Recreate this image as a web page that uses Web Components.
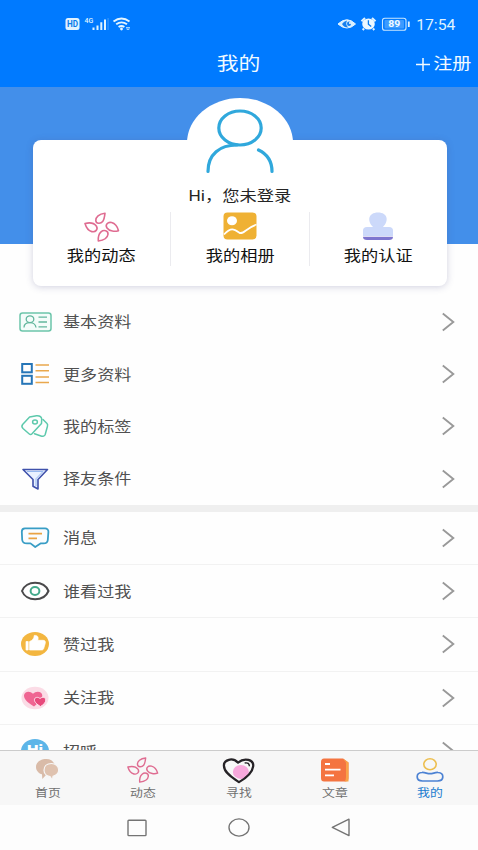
<!DOCTYPE html>
<html lang="zh-CN">
<head>
<meta charset="utf-8">
<title>我的</title>
<style>
html,body{margin:0;padding:0}
body{width:478px;height:850px;overflow:hidden;background:#fefefe;font-family:Roboto,"Noto Sans CJK SC",sans-serif}
</style>
</head>
<body>
<profile-app></profile-app>
<script>
const petals = `<g fill="none" stroke="#df6c91" stroke-width="1.6" stroke-linejoin="round"><path d="M21 1.2C15 1.8 11.5 5 11.8 8.5C12 11.8 16.5 12.2 18.7 9.5C20.3 7.5 20.7 4 21 1.2Z"/><path d="M1 11.5C5 10.5 10 11 12.3 14C14.5 17.3 11.5 20.5 7.8 19.6C4 18.6 2 15 1 11.5Z"/><path d="M34.5 18.7C31 19.8 25.5 19.5 23 16C20.8 12.8 23.8 9.6 27.6 10.6C31.3 11.6 33.5 15 34.5 18.7Z"/><path d="M14.3 29C14 25.5 14.8 21.8 17 19.8C20 17.3 24.3 18.7 24 22.2C23.6 26 19 28.3 14.3 29Z"/></g>`;
const heartPath = 'M18 27C12 23 2 17 2 9C2 3 11 0 17 6C24 0 34 3 33 10C32 18 23 24 18 27Z';
const icons = {
  petals: ['0 0 36 30', petals],
  id: ['0 0 36 30', `<rect x="3" y="6.1" width="31" height="18" rx="2.5" fill="#f4fcfa" stroke="#6cc5aa" stroke-width="1.5"/><g fill="none" stroke="#62b69d" stroke-width="1.3"><ellipse cx="13" cy="12.2" rx="3.8" ry="3.4"/><path d="M7 20.5C7 17 10 15.6 13 15.6C16 15.6 18.7 17.5 19 20.5M21.5 10.2H30M21.5 15H30M21.5 19.8H30"/></g>`],
  more: ['0 0 36 30', `<g fill="none" stroke="#2675b7" stroke-width="2"><rect x="5.2" y="5" width="9.6" height="8.3"/><rect x="5.2" y="16.8" width="9.6" height="8"/></g><path d="M18.5 6H32M18.5 11.7H32M18.5 18.1H32M18.5 23.5H32" stroke="#e9a84d" stroke-width="1.5"/>`],
  tag: ['0 0 36 30', `<g fill="none" stroke="#5dc9ac" stroke-width="1.5" stroke-linejoin="round" stroke-linecap="round"><path d="M5.6 13.5L12.6 6L19.5 4.7C22.5 4.5 24.5 6 24.7 8L24.5 12.5L15 22.8C14 23.8 12.7 23.3 12 22.7L6 17.5C4.5 16 4.6 14.8 5.6 13.5Z"/><path d="M26 8.5L30 12.5C30.8 13.3 30.7 14.5 30.4 15.5L28.2 23.5C27.6 25.3 25.7 25.6 24 25L17.5 22.7"/><ellipse cx="18" cy="11" rx="2.4" ry="2"/></g>`],
  funnel: ['0 0 36 30', `<path d="M6 5.5H30.5L21 15.5V25L16 22.3V15.5Z" fill="#e9f1ff" stroke="#3f51ab" stroke-width="1.6" stroke-linejoin="round"/><path d="M10 7.5H26L19 14.7V22" fill="none" stroke="#95b8ef"/>`],
  message: ['0 0 36 30', `<path d="M8 5.4H28C30 5.4 31.6 6.8 31.4 8.8L30.8 17C30.6 19.5 28.5 20.4 26.5 20.4H23.5L18.2 24L13.5 20.4H10C7 20.4 5.5 19.2 5.2 17L4.8 8.8C4.8 6.5 6 5.4 8 5.4Z" fill="#fafdff" stroke="#389dc5" stroke-width="1.8" stroke-linejoin="round"/><path d="M11.5 10.6H25M11.5 15.4H20" stroke="#e9a344" stroke-width="1.7"/>`],
  eye: ['0 0 36 30', `<path d="M5 15C9 4 27 4 31.5 15C27 26 9 26 5 15Z" fill="#fff" stroke="#4a494b" stroke-width="2"/><ellipse cx="18" cy="15" rx="4.4" ry="3.9" fill="#fff" stroke="#43a98b" stroke-width="2"/>`],
  thumb: ['0 0 36 30', `<ellipse cx="18" cy="15" rx="14" ry="12" fill="#f3b640"/><path d="M9 12.5H11.2V21H9ZM12.6 12.5C16 11.3 17 9 17.3 6.4C21.5 6.2 21.5 9 20.8 11.3H26C28.4 11.3 28.7 13 28.2 14.5L26.7 19.5C26.3 20.7 25.5 21 24.5 21H12.6Z" fill="#fff" stroke="#fff" stroke-width=".7" stroke-linejoin="round"/>`],
  hearts: ['0 0 36 30', `<ellipse cx="18" cy="15" rx="13.5" ry="11.3" fill="#fbdce6"/><path d="M17 23.5C12 20.5 6.8 16.5 7 12.5C7.2 8.3 13 7.2 16 10.8C19 7.2 25.5 8.3 25.3 12.5C25.2 16.5 21 20.5 17 23.5Z" fill="#ef6592"/><path d="M23.5 23.5C20 21.5 17.3 19 17.4 16.8C17.5 14 21.2 13.6 23 15.6C25.2 13.4 28.8 14.2 28.8 17C28.8 19.5 26.6 21.7 23.5 23.5Z" fill="#e84a7c" stroke="#ffe3ed"/>`],
  hi: ['0 0 36 30', `<ellipse cx="18" cy="15" rx="14" ry="12" fill="#5cb5e8"/><text x="18" y="18" text-anchor="middle" font-family="Roboto,sans-serif" font-size="13" font-weight="900" fill="#fff" textLength="16" lengthAdjust="spacingAndGlyphs">Hi</text>`],
  photo: ['0 0 34 28', `<rect x=".5" y=".5" width="33" height="27" rx="4" fill="#efb134"/><ellipse cx="9" cy="8.7" rx="5" ry="4.5" fill="#fff"/><path d="M1 22.5C8 15 11 17 16 20.5C20 23.5 23 16 33.5 12.5" fill="none" stroke="#fff" stroke-width="1.8"/>`],
  stamp: ['0 0 32 28', `<path d="M11 15C5 9 6 .5 16 .5C26 .5 27 9 21 15H27Q31 15 31 18.5V24H1V18.5Q1 15 5 15Z" fill="#ccd9fa"/><path d="M1 24.7H31Q31 28 27 28H5Q1 28 1 24.7Z" fill="#7e76cf"/>`],
  user: ['0 0 70 66', `<g fill="none" stroke="#30a8dc" stroke-width="3.2" stroke-linecap="round"><ellipse cx="35" cy="19" rx="21.2" ry="17"/><path d="M3 62.5C3 45 15 36 32 36M53.5 41C62 45 67 52 67 62.5"/></g>`],
  chevron: ['0 0 14 20', `<path d="M1.8 1.5L12.3 10L1.8 18.5" fill="none" stroke="#999" stroke-width="1.9"/>`],
  chat: ['0 0 26 24', `<path d="M11.5 1C5 1 1 4.5 1 9C1 13 4 15.5 7 16.3L7.3 21L11 17C16 17 20 14 20 9C20 4 16 1 11.5 1Z" fill="#d9bba8"/><path d="M16.5 5.5C11.5 5.5 9 8.5 9 12.3C9 16 12 18.2 15 18.6L17.5 22.3L18 18.4C21 17.5 23.7 15.5 23.7 12C23.7 8.3 20.5 5.5 16.5 5.5Z" fill="#dfc2af" stroke="#f7f7f7" stroke-width="1.2"/>`],
  heart: ['0 0 36 29', `<ellipse cx="20" cy="16" rx="8.5" ry="7.5" fill="#f7a8dc"/><path d="${heartPath}" fill="none" stroke="#252226" stroke-width="2.4" stroke-linejoin="round"/><path d="M24 6.5Q29 5.5 29 10" fill="none" stroke="#252226" stroke-width="1.5"/>`],
  article: ['0 0 30 24', `<path d="M4 .5H23L28.5 4.5V20Q28.5 23.5 25 23.5H4Q1 23.5 1 20V4Q1 .5 4 .5Z" fill="#f47440"/><path d="M23 .5L28.5 4.5V23.5H24.5Q26 22 26 19V4.5Z" fill="#f9a348"/><path d="M5 6H10M5 11.7H20.5M5 17.3H14" stroke="#fff" stroke-width="1.8"/>`],
  mine: ['0 0 30 26', `<ellipse cx="15" cy="7.2" rx="6.2" ry="5.5" fill="none" stroke="#edbf50" stroke-width="1.6"/><path d="M7 15.5C10 15.2 12 16.7 15 16.7S20 15.2 23 15.5C29.5 16 29.5 23.8 22.5 24H7.5C.5 23.8.5 16 7 15.5Z" fill="none" stroke="#4c82d3" stroke-width="1.7"/>`],
  square: ['0 0 20 18', `<rect x="1" y="1.2" width="18" height="15.4" rx=".8" fill="none" stroke="#747474" stroke-width="1.4"/>`],
  circle: ['0 0 22 19', `<ellipse cx="11" cy="9.5" rx="10" ry="8.6" fill="none" stroke="#747474" stroke-width="1.4"/>`],
  back: ['0 0 20 19', `<path d="M18 1.2V17.6L1.3 9.4Z" fill="none" stroke="#747474" stroke-width="1.4" stroke-linejoin="round"/>`],
  signals: ['0 0 70 20', `<rect x=".5" y="4" width="14" height="12" rx="2.5" fill="#e1f3ff"/><text x="7.5" y="13.1" text-anchor="middle" font-family="Roboto" font-size="8.5" font-weight="700" fill="#087bea" textLength="11" lengthAdjust="spacingAndGlyphs">HD</text><text x="19.5" y="9" font-family="Roboto" font-size="7" font-weight="500" fill="#def2ff">4G</text><g fill="#ddf2ff"><path d="M27.5 13.5h2V16h-2zM31.5 11.5h2V16h-2zM35.3 8.3h2V16h-2zM39 5.5h2V16h-2z"/><path d="M42.7 4h.7V16h-.7z" opacity=".4"/></g><g fill="none" stroke="#e4f5ff" stroke-width="1.9"><path d="M48.5 7.4Q56.5 1.6 64.5 7.4M51.2 10.3Q56.5 6.4 62 10.3M53.6 13Q56.5 11 59.4 13"/></g><circle cx="56.5" cy="15" r="1.4" fill="#e4f5ff"/><path d="M61 13.5h4M62 13.5h2v2h-2z" stroke="#9fd2ff" fill="none"/>`],
  status: ['0 0 76 20', `<path d="M-1 10Q8 1.5 16.5 10Q8 18 -1 10Z" fill="#d8efff" stroke="#e1f3ff"/><path d="M3 10Q5 7 8 6.5Q6 11 9.5 13.5Q5 13.7 3 10Z" fill="#1680ef"/><ellipse cx="10" cy="9.7" rx="2" ry="2.2" fill="#1680ef"/><circle cx="11" cy="9" r="1" fill="#fff"/><g transform="translate(-2)"><ellipse cx="31.5" cy="10" rx="6.3" ry="5.6" fill="#edf8ff"/><path d="M24.5 7.3L28 4M35 4L38.5 7.3M27 14.5L25.7 16M36 14.5L37.3 16" stroke="#e1f3ff" stroke-width="2"/><path d="M31.4 6.3V10.3L34.2 12.5" fill="none" stroke="#077bf0" stroke-width="1.3"/></g><g transform="translate(-2)"><rect x="45.5" y="4.2" width="23.5" height="12" rx="2.3" fill="none" stroke="#c7e6ff" stroke-width="1.1"/><rect x="47.5" y="6" width="19.5" height="8.4" rx="1" fill="#3c9bff"/><text x="57.3" y="13.2" text-anchor="middle" font-family="Roboto" font-size="9" font-weight="700" fill="#f2faff" textLength="12" lengthAdjust="spacingAndGlyphs">89</text><path d="M71.8 7.5V13" stroke="#e1f3ff" stroke-width="1.8"/></g>`]
};

class UiIcon extends HTMLElement {
  connectedCallback(){
    const [box, art] = icons[this.getAttribute('name')];
    const d = box.split(' ');
    const w = this.getAttribute('w') || d[2], h = this.getAttribute('h') || d[3];
    this.attachShadow({mode:'open'}).innerHTML =
      `<style>:host{display:block;flex:none;width:${w}px;height:${h}px}svg{display:block;overflow:visible}</style><svg width="${w}" height="${h}" viewBox="${box}" preserveAspectRatio="none">${art}</svg>`;
  }
}
customElements.define('ui-icon', UiIcon);

class WideText extends HTMLElement {
  connectedCallback(){
    const size = this.getAttribute('size'), sx = this.getAttribute('sx') || 1.18, o = this.getAttribute('origin') || 'center';
    this.attachShadow({mode:'open'}).innerHTML =
      `<style>:host{display:block;white-space:nowrap;font-size:${size}px;line-height:1.3;transform:scaleX(${sx});transform-origin:${o} center}</style><slot></slot>`;
  }
}
customElements.define('wide-text', WideText);

class StatusBar extends HTMLElement {
  constructor(){ super(); this.attachShadow({mode:'open'}).innerHTML = `
    <style>:host{display:flex;align-items:center;height:48px;box-sizing:border-box;padding:0 23px 0 65px;color:#dff2ff}.gap{flex:1}ui-icon+wide-text{margin-left:3px;padding-top:3px}</style>
    <ui-icon name="signals"></ui-icon><span class="gap"></span><ui-icon name="status"></ui-icon><wide-text size="15" sx="1.05" origin="right">17:54</wide-text>`; }
}
customElements.define('status-bar', StatusBar);

class TitleBar extends HTMLElement {
  constructor(){ super(); this.attachShadow({mode:'open'}).innerHTML = `
    <style>:host{display:grid;grid-template-columns:1fr auto 1fr;align-items:center;height:39px;padding:0 7px;color:#f2faff;box-sizing:border-box}
    .reg{justify-self:end;display:flex;align-items:center;gap:9px;padding-bottom:7px}svg{display:block}.t{padding-bottom:7px}</style>
    <span></span><wide-text class="t" size="18.5">我的</wide-text>
    <div class="reg"><svg width="14" height="13" viewBox="0 0 14 13"><path d="M0 6.5H14M7 0V13" stroke="#f2faff" stroke-width="1.5"/></svg><wide-text size="16.2" origin="right">注册</wide-text></div>`; }
}
customElements.define('title-bar', TitleBar);

class CardTab extends HTMLElement {
  connectedCallback(){ this.attachShadow({mode:'open'}).innerHTML = `
    <style>:host{flex:1;display:flex;flex-direction:column;align-items:center;height:54px;color:#111}.i{height:35px;display:flex;align-items:flex-start}</style>
    <div class="i"><ui-icon name="${this.getAttribute('icon')}"></ui-icon></div><wide-text size="14.6"><slot></slot></wide-text>`; }
}
customElements.define('card-tab', CardTab);

class ProfileCard extends HTMLElement {
  constructor(){ super(); this.attachShadow({mode:'open'}).innerHTML = `
    <style>:host{display:block;position:relative;width:414px;height:146px;border-radius:8px;background:#fff;box-shadow:0 1px 7px rgba(70,70,130,.25)}
    .dome{position:absolute;left:154px;top:-42px;width:106px;height:90px;border-radius:50%;background:#fff}
    .inner{position:relative;display:flex;flex-direction:column;align-items:center;color:#252525}
    ui-icon{margin-top:-31px}.greet{margin-top:12.5px}
    .tabs{display:flex;align-self:stretch;margin-top:6px}.tabs i{width:1px;height:54px;background:#ebebef}</style>
    <div class="dome"></div><div class="inner"><ui-icon name="user"></ui-icon><wide-text class="greet" size="14.4" sx="1.2">Hi，您未登录</wide-text>
    <div class="tabs"><card-tab icon="petals">我的动态</card-tab><i></i><card-tab icon="photo">我的相册</card-tab><i></i><card-tab icon="stamp">我的认证</card-tab></div></div>`; }
}
customElements.define('profile-card', ProfileCard);

class MenuRow extends HTMLElement {
  connectedCallback(){ this.attachShadow({mode:'open'}).innerHTML = `
    <style>:host{display:flex;align-items:center;flex:none;height:var(--row,52.3px);box-sizing:border-box;border-bottom:var(--line,0);padding:0 23px 0 17px;color:#505050}
    wide-text{margin-left:10px;flex:1;padding-top:4px}</style>
    <ui-icon name="${this.getAttribute('icon')}"></ui-icon><wide-text size="14.5" origin="left"><slot></slot></wide-text><ui-icon name="chevron"></ui-icon>`; }
}
customElements.define('menu-row', MenuRow);

class NavTab extends HTMLElement {
  connectedCallback(){ this.attachShadow({mode:'open'}).innerHTML = `
    <style>:host{flex:1;display:flex;flex-direction:column;align-items:center;color:#707070}:host([active]){color:#1b7ccf}.i{height:34px;display:flex;align-items:center;padding-top:2px}</style>
    <div class="i"><ui-icon name="${this.getAttribute('icon')}" w="${this.getAttribute('w')}" h="${this.getAttribute('h')}"></ui-icon></div><wide-text size="10.9"><slot></slot></wide-text>`; }
}
customElements.define('nav-tab', NavTab);

class TabBar extends HTMLElement {
  constructor(){ super(); this.attachShadow({mode:'open'}).innerHTML = `
    <style>:host{display:flex;flex:none;height:55px;box-sizing:border-box;border-top:1px solid #ccc;background:#f7f7f7}</style>
    <nav-tab icon="chat" w="26" h="24">首页</nav-tab><nav-tab icon="petals" w="32" h="26">动态</nav-tab><nav-tab icon="heart" w="34" h="27">寻找</nav-tab><nav-tab icon="article" w="30" h="24">文章</nav-tab><nav-tab icon="mine" w="30" h="26" active>我的</nav-tab>`; }
}
customElements.define('tab-bar', TabBar);

class SystemBar extends HTMLElement {
  constructor(){ super(); this.attachShadow({mode:'open'}).innerHTML = `
    <style>:host{display:flex;flex:none;align-items:center;justify-content:center;gap:81px;height:45px;background:#fdfdfd}</style>
    <ui-icon name="square"></ui-icon><ui-icon name="circle"></ui-icon><ui-icon name="back"></ui-icon>`; }
}
customElements.define('system-bar', SystemBar);

class ProfileApp extends HTMLElement {
  constructor(){ super(); this.attachShadow({mode:'open'}).innerHTML = `
    <style>:host{display:flex;flex-direction:column;width:478px;height:850px;overflow:hidden}
    header{flex:none;background:#007aff;height:87px}.banner{flex:none;height:157px;box-sizing:border-box;padding:53px 0 0 33px;background:#438fea}
    main{flex:1;min-height:0;overflow:hidden;padding-top:51.5px;display:flex;flex-direction:column}
    .split{flex:none;height:7px;background:#efefef}.social{--row:53.3px;--line:1px solid #f2f2f2}profile-card{z-index:1}</style>
    <header><status-bar></status-bar><title-bar></title-bar></header>
    <div class="banner"><profile-card></profile-card></div>
    <main><section><menu-row icon="id">基本资料</menu-row><menu-row icon="more">更多资料</menu-row><menu-row icon="tag">我的标签</menu-row><menu-row icon="funnel">择友条件</menu-row></section>
    <div class="split"></div>
    <section class="social"><menu-row icon="message">消息</menu-row><menu-row icon="eye">谁看过我</menu-row><menu-row icon="thumb">赞过我</menu-row><menu-row icon="hearts">关注我</menu-row><menu-row icon="hi">招呼</menu-row></section></main>
    <tab-bar></tab-bar><system-bar></system-bar>`; }
}
customElements.define('profile-app', ProfileApp);
</script>
</body>
</html>
